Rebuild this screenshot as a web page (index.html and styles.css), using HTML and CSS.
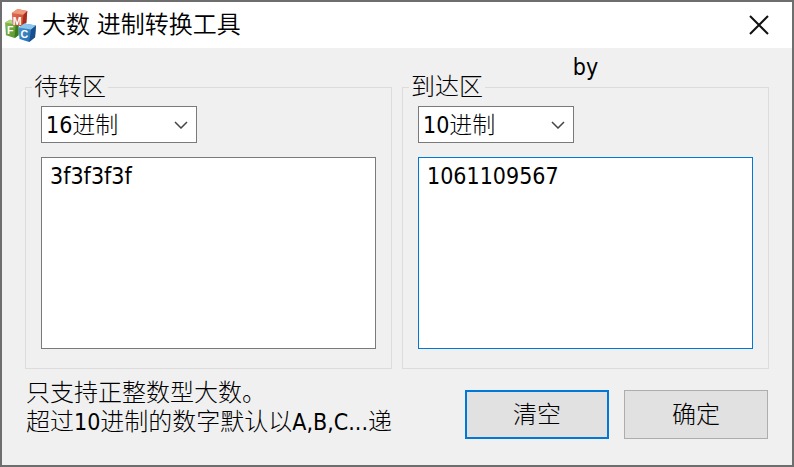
FILE: index.html
```
<!DOCTYPE html>
<html lang="zh-CN">
	<head>
		<meta charset="UTF-8">
		<title>大数 进制转换工具</title>
		<link rel="stylesheet" href="styles.css">
	</head>
	<body>

		<!-- 窗口 -->
		<div class="window">

			<!-- 标题栏 -->
			<header class="title-bar">
				<svg class="logo" viewBox="0 0 32 34" aria-hidden="true">
					<defs>
						<linearGradient id="red" x2="1" y2="1"><stop offset="0" stop-color="#e0765a"/><stop offset="1" stop-color="#c43c28"/></linearGradient>
						<linearGradient id="green" x2="1" y2="1"><stop offset="0" stop-color="#8fbe52"/><stop offset="1" stop-color="#4f8f2c"/></linearGradient>
						<linearGradient id="blue" x2="1" y2="1"><stop offset="0" stop-color="#4c97d2"/><stop offset="1" stop-color="#1f66ad"/></linearGradient>
					</defs>
					<path d="M0 14L5 11L14 12L14 27L10 30L1 27Z" fill="url(#green)"/>
					<path d="M0 14L5 11L14 12L11 16Z" fill="#b2d67e"/>
					<path d="M11 16L14 13L14 27L10 30Z" fill="#3c7a22"/>
					<path d="M7 4L13 0L23 2L22 14L18 18L8 16Z" fill="url(#red)"/>
					<path d="M7 4L13 0L23 2L19 6Z" fill="#ef9a7c"/>
					<path d="M19 6L23 2L22 14L18 18Z" fill="#a92c1d"/>
					<path d="M14 19L20 15L32 17L31 29L25 34L15 31Z" fill="url(#blue)"/>
					<path d="M14 19L20 15L32 17L27 21Z" fill="#8cc6ed"/>
					<path d="M27 21L32 17L31 29L25 34Z" fill="#174f8c"/>
					<text class="logo-text" x="8" y="16">M</text>
					<text class="logo-text" x="2" y="26">F</text>
					<text class="logo-text" x="16" y="30">C</text>
				</svg>
				<h1 class="title">大数 进制转换工具</h1>
				<button class="close" type="button" aria-label="关闭">
					<svg width="20" height="20" viewBox="0 0 20 20" aria-hidden="true">
						<path d="M1 1L19 19M19 1L1 19" fill="none" stroke="#111" stroke-width="2"/>
					</svg>
				</button>
			</header>

			<form class="dialog">
				<p class="author">by</p>

				<!-- 待转区 -->
				<fieldset class="group">
					<legend>待转区</legend>
					<div class="group-body">
						<div class="combo">
							<select aria-label="待转区进制">
								<option>2进制</option>
								<option>8进制</option>
								<option>10进制</option>
								<option selected>16进制</option>
							</select>
							<svg class="arrow" width="14" height="8" viewBox="0 0 14 8" aria-hidden="true"><path d="M1 1L7 7L13 1"/></svg>
						</div>
						<textarea class="number" aria-label="待转区数字" spellcheck="false">3f3f3f3f</textarea>
					</div>
				</fieldset>

				<!-- 到达区 -->
				<fieldset class="group">
					<legend>到达区</legend>
					<div class="group-body">
						<div class="combo">
							<select aria-label="到达区进制">
								<option>2进制</option>
								<option>8进制</option>
								<option selected>10进制</option>
								<option>16进制</option>
							</select>
							<svg class="arrow" width="14" height="8" viewBox="0 0 14 8" aria-hidden="true"><path d="M1 1L7 7L13 1"/></svg>
						</div>
						<textarea class="number active" aria-label="到达区数字" spellcheck="false">1061109567</textarea>
					</div>
				</fieldset>

				<!-- 说明和按钮 -->
				<footer class="bottom">
					<div class="note">
						<p>只支持正整数型大数。</p>
						<p>超过<span class="latin">10</span>进制的数字默认以<span class="latin">A,B,C...</span>递</p>
					</div>
					<div class="buttons">
						<button class="btn default" type="button">清空</button>
						<button class="btn" type="button">确定</button>
					</div>
				</footer>
			</form>

		</div>

	</body>
</html>
```

FILE: styles.css
```
*{
	margin: 0;
	padding: 0;
	box-sizing: border-box;
}

body{
	font: 300 24px/24px "DejaVu Sans Condensed", "Noto Sans CJK SC", sans-serif;
	color: #000;
}

button, select, textarea{
	font: inherit;
	color: inherit;
	border-radius: 0;
}

/*窗口边框*/
.window{
	display: flex;
	flex-direction: column;
	min-height: 100vh;
	border: 2px solid #6e6e6e;
	background-color: #f0f0f0;
}

/*标题栏*/
.title-bar{
	display: flex;
	align-items: center;
	height: 46px;
	padding-left: 3px;
	background-color: #fff;
}

.logo{
	width: 31px;
	height: 33px;
}

.logo-text{
	font: bold 11px "Liberation Sans", sans-serif;
	fill: #fff;
}

.title{
	flex: 1;
	margin-left: 6px;
	font-size: 24px;
	font-weight: 350;
}

.close{
	display: flex;
	align-items: center;
	justify-content: center;
	width: 66px;
	height: 46px;
	border: 0;
	background: none;
}

/*对话框内容*/
.dialog{
	flex: 1;
	display: grid;
	grid-template-columns: 1fr 1fr;
	grid-template-rows: auto 1fr auto;
	column-gap: 10px;
	padding: 7px 23px 26px;
}

.author{
	grid-column: 2;
	margin-bottom: -4px;
	font-size: 23px;
	text-align: center;
}

/*分组框*/
.group{
	display: flex;
	flex-direction: column;
	min-width: 0;
	padding: 7px 15px 19px;
	border: 1px solid #dcdcdc;
}

.group legend{
	margin-left: -9px;
	padding: 0 2px;
}

.group-body{
	display: flex;
	flex-direction: column;
	gap: 14px;
	height: 100%;
}

/*下拉框*/
.combo{
	position: relative;
	width: 156px;
}

.combo select{
	display: block;
	width: 100%;
	height: 37px;
	padding-left: 4px;
	border: 1px solid #7a7a7a;
	background-color: #fff;
	font-size: 23px;
	appearance: none;
}

.combo .arrow{
	position: absolute;
	top: 15px;
	right: 9px;
	fill: none;
	stroke: #444;
	stroke-width: 1.5;
	pointer-events: none;
}

/*数字输入区*/
.number{
	flex: 1;
	width: 100%;
	min-height: 120px;
	padding: 4px 8px;
	border: 1px solid #7a7a7a;
	background-color: #fff;
	font-size: 23px;
	line-height: 28px;
	resize: none;
	outline: none;
}

.number.active{
	border-color: #0078d7;
}

/*底部*/
.bottom{
	grid-column: 1 / 3;
	display: flex;
	justify-content: space-between;
	align-items: flex-end;
	padding: 10px 1px 0;
}

.note{
	margin-bottom: 2px;
	line-height: 29px;
	white-space: nowrap;
}

.latin{
	font-size: 23px;
}

.buttons{
	display: flex;
	gap: 15px;
}

.btn{
	width: 144px;
	height: 49px;
	border: 1px solid #adadad;
	background-color: #e1e1e1;
}

.btn.default{
	border: 2px solid #0078d7;
}
```
